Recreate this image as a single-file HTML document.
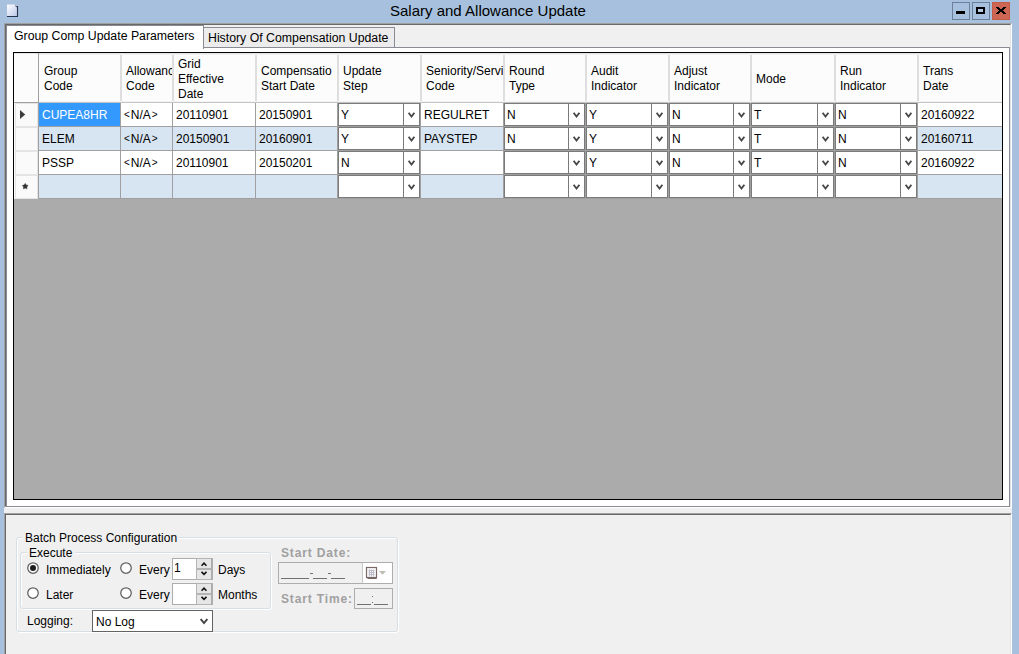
<!DOCTYPE html>
<html><head><meta charset="utf-8"><title>Salary and Allowance Update</title>
<style>
html,body{margin:0;padding:0;width:1019px;height:654px;overflow:hidden}
body{position:relative;font-family:"Liberation Sans", sans-serif;font-size:12px;color:#000}
div{position:absolute;box-sizing:border-box}
.t{white-space:nowrap}
</style></head><body>
<div style="left:0px;top:0px;width:1019px;height:654px;background:#a6c0dd"></div>
<svg style="position:absolute;left:7px;top:4px" width="12" height="14" viewBox="0 0 12 14"><defs><linearGradient id="g1" x1="0" y1="0" x2="1" y2="1"><stop offset="0" stop-color="#ffffff"/><stop offset="1" stop-color="#b9c6ea"/></linearGradient></defs><path d="M0 0.5 H8.5 L10.5 2.5 V12 H0 Z" fill="url(#g1)"/><path d="M10.5 2 V12.5 H0" fill="none" stroke="#26344f" stroke-width="1.1"/><path d="M8 0.6 L10.6 3.2 L8.6 3 Z" fill="#2a3a55"/><rect x="8.2" y="1.6" width="1" height="1" fill="#e8ecf8"/></svg>
<div class="t" style="left:390px;top:1.04px;font-size:15px;line-height:19px;color:#000;font-weight:400;">Salary and Allowance Update</div>
<div style="left:952px;top:2px;width:18px;height:18px;background:#a6c0dd;border:1px solid #6d7f99;box-sizing:border-box"><div style="left:3px;top:8px;width:9px;height:3px;background:#000"></div></div>
<div style="left:972px;top:2px;width:18px;height:18px;background:#a6c0dd;border:1px solid #6d7f99;box-sizing:border-box"><div style="left:3px;top:4px;width:9px;height:7px;border:2px solid #000;box-sizing:border-box;background:#b4cce6"></div></div>
<div style="left:992px;top:2px;width:18px;height:18px;background:#cd6652;border:1px solid #c45a48;box-sizing:border-box"><svg style="position:absolute;left:3px;top:4px" width="10" height="7" shape-rendering="crispEdges" fill="#000"><rect x="0" y="0" width="1" height="1"/><rect x="1" y="0" width="1" height="1"/><rect x="2" y="0" width="1" height="1"/><rect x="7" y="0" width="1" height="1"/><rect x="8" y="0" width="1" height="1"/><rect x="9" y="0" width="1" height="1"/><rect x="1" y="1" width="1" height="1"/><rect x="2" y="1" width="1" height="1"/><rect x="3" y="1" width="1" height="1"/><rect x="6" y="1" width="1" height="1"/><rect x="7" y="1" width="1" height="1"/><rect x="8" y="1" width="1" height="1"/><rect x="2" y="2" width="1" height="1"/><rect x="3" y="2" width="1" height="1"/><rect x="4" y="2" width="1" height="1"/><rect x="5" y="2" width="1" height="1"/><rect x="6" y="2" width="1" height="1"/><rect x="7" y="2" width="1" height="1"/><rect x="3" y="3" width="1" height="1"/><rect x="4" y="3" width="1" height="1"/><rect x="5" y="3" width="1" height="1"/><rect x="6" y="3" width="1" height="1"/><rect x="2" y="4" width="1" height="1"/><rect x="3" y="4" width="1" height="1"/><rect x="4" y="4" width="1" height="1"/><rect x="5" y="4" width="1" height="1"/><rect x="6" y="4" width="1" height="1"/><rect x="7" y="4" width="1" height="1"/><rect x="1" y="5" width="1" height="1"/><rect x="2" y="5" width="1" height="1"/><rect x="3" y="5" width="1" height="1"/><rect x="6" y="5" width="1" height="1"/><rect x="7" y="5" width="1" height="1"/><rect x="8" y="5" width="1" height="1"/><rect x="0" y="6" width="1" height="1"/><rect x="1" y="6" width="1" height="1"/><rect x="2" y="6" width="1" height="1"/><rect x="7" y="6" width="1" height="1"/><rect x="8" y="6" width="1" height="1"/><rect x="9" y="6" width="1" height="1"/></svg></div>
<div style="left:4px;top:23px;width:1008px;height:485px;background:#f0f0f0;border-top:1px solid #a0a0a0;border-left:1px solid #a0a0a0;border-right:1px solid #ffffff;border-bottom:1px solid #ffffff;box-sizing:border-box"></div>
<div style="left:5px;top:24px;width:1006px;height:483px;border-top:1px solid #696969;border-left:1px solid #696969;border-right:1px solid #e3e3e3;border-bottom:1px solid #e3e3e3;box-sizing:border-box"></div>
<div style="left:6px;top:47px;width:1004px;height:460px;background:#fff;border:1px solid #898c95;box-sizing:border-box"></div>
<div style="left:6px;top:25px;width:198px;height:24px;background:#fff;border:1px solid #898c95;border-bottom:none;box-sizing:border-box"></div>
<div style="left:7px;top:47px;width:196px;height:2px;background:#fff"></div>
<div class="t" style="left:14px;top:27.78px;font-size:12.3px;line-height:16.3px;color:#000;font-weight:400;">Group Comp Update Parameters</div>
<div style="left:203px;top:27px;width:192px;height:21px;background:#ececec;border:1px solid #898c95;box-sizing:border-box"></div>
<div class="t" style="left:208px;top:29.78px;font-size:12.3px;line-height:16.3px;color:#000;font-weight:400;">History Of Compensation Update</div>
<div style="left:13px;top:52px;width:990px;height:448px;background:#ababab;border:1px solid #000;box-sizing:border-box"></div>
<div style="left:14px;top:53px;width:988px;height:49px;background:#fcfcfc"></div>
<div style="left:14px;top:53px;width:988px;height:1px;background:#e6e6e6"></div>
<div style="left:39px;top:54px;width:962px;height:1px;background:#f0f0f0"></div>
<div style="left:14px;top:102px;width:25px;height:1px;background:#a0a0a0"></div>
<div style="left:39px;top:102px;width:962px;height:1px;background:#c4c4c4"></div>
<div style="left:39px;top:101px;width:962px;height:1px;background:#f4f4f4"></div>
<div style="left:38px;top:53px;width:1px;height:50px;background:#a0a0a0"></div>
<div style="left:120px;top:55px;width:2px;height:46px;background:#dedede"></div>
<div style="left:172px;top:55px;width:2px;height:46px;background:#dedede"></div>
<div style="left:255px;top:55px;width:2px;height:46px;background:#dedede"></div>
<div style="left:337px;top:55px;width:2px;height:46px;background:#dedede"></div>
<div style="left:420px;top:55px;width:2px;height:46px;background:#dedede"></div>
<div style="left:503px;top:55px;width:2px;height:46px;background:#dedede"></div>
<div style="left:585px;top:55px;width:2px;height:46px;background:#dedede"></div>
<div style="left:668px;top:55px;width:2px;height:46px;background:#dedede"></div>
<div style="left:750px;top:55px;width:2px;height:46px;background:#dedede"></div>
<div style="left:834px;top:55px;width:2px;height:46px;background:#dedede"></div>
<div style="left:917px;top:55px;width:2px;height:46px;background:#dedede"></div>
<div style="left:39px;top:53px;width:81px;height:49px;overflow:hidden"><div style="left:5px;top:0;width:300px;height:49px"><div class="t" style="left:0;top:11.30px;font-size:12px;line-height:15px">Group</div><div class="t" style="left:0;top:26.30px;font-size:12px;line-height:15px">Code</div></div></div>
<div style="left:121px;top:53px;width:51px;height:49px;overflow:hidden"><div style="left:5px;top:0;width:300px;height:49px"><div class="t" style="left:0;top:11.30px;font-size:12px;line-height:15px">Allowance</div><div class="t" style="left:0;top:26.30px;font-size:12px;line-height:15px">Code</div></div></div>
<div style="left:173px;top:53px;width:82px;height:49px;overflow:hidden"><div style="left:5px;top:0;width:300px;height:49px"><div class="t" style="left:0;top:4.30px;font-size:12px;line-height:15px">Grid</div><div class="t" style="left:0;top:19.30px;font-size:12px;line-height:15px">Effective</div><div class="t" style="left:0;top:34.30px;font-size:12px;line-height:15px">Date</div></div></div>
<div style="left:256px;top:53px;width:81px;height:49px;overflow:hidden"><div style="left:5px;top:0;width:300px;height:49px"><div class="t" style="left:0;top:11.30px;font-size:12px;line-height:15px">Compensatio</div><div class="t" style="left:0;top:26.30px;font-size:12px;line-height:15px">Start Date</div></div></div>
<div style="left:338px;top:53px;width:82px;height:49px;overflow:hidden"><div style="left:5px;top:0;width:300px;height:49px"><div class="t" style="left:0;top:11.30px;font-size:12px;line-height:15px">Update</div><div class="t" style="left:0;top:26.30px;font-size:12px;line-height:15px">Step</div></div></div>
<div style="left:421px;top:53px;width:82px;height:49px;overflow:hidden"><div style="left:5px;top:0;width:300px;height:49px"><div class="t" style="left:0;top:11.30px;font-size:12px;line-height:15px">Seniority/Service</div><div class="t" style="left:0;top:26.30px;font-size:12px;line-height:15px">Code</div></div></div>
<div style="left:504px;top:53px;width:81px;height:49px;overflow:hidden"><div style="left:5px;top:0;width:300px;height:49px"><div class="t" style="left:0;top:11.30px;font-size:12px;line-height:15px">Round</div><div class="t" style="left:0;top:26.30px;font-size:12px;line-height:15px">Type</div></div></div>
<div style="left:586px;top:53px;width:82px;height:49px;overflow:hidden"><div style="left:5px;top:0;width:300px;height:49px"><div class="t" style="left:0;top:11.30px;font-size:12px;line-height:15px">Audit</div><div class="t" style="left:0;top:26.30px;font-size:12px;line-height:15px">Indicator</div></div></div>
<div style="left:669px;top:53px;width:81px;height:49px;overflow:hidden"><div style="left:5px;top:0;width:300px;height:49px"><div class="t" style="left:0;top:11.30px;font-size:12px;line-height:15px">Adjust</div><div class="t" style="left:0;top:26.30px;font-size:12px;line-height:15px">Indicator</div></div></div>
<div style="left:751px;top:53px;width:83px;height:49px;overflow:hidden"><div style="left:5px;top:0;width:300px;height:49px"><div class="t" style="left:0;top:18.80px;font-size:12px;line-height:15px">Mode</div></div></div>
<div style="left:835px;top:53px;width:82px;height:49px;overflow:hidden"><div style="left:5px;top:0;width:300px;height:49px"><div class="t" style="left:0;top:11.30px;font-size:12px;line-height:15px">Run</div><div class="t" style="left:0;top:26.30px;font-size:12px;line-height:15px">Indicator</div></div></div>
<div style="left:918px;top:53px;width:83px;height:49px;overflow:hidden"><div style="left:5px;top:0;width:300px;height:49px"><div class="t" style="left:0;top:11.30px;font-size:12px;line-height:15px">Trans</div><div class="t" style="left:0;top:26.30px;font-size:12px;line-height:15px">Date</div></div></div>
<div style="left:14px;top:103px;width:24px;height:24px;background:#fdfdfd"></div>
<div style="left:15px;top:103px;width:23px;height:24px;background:#fafafa;border:1px solid #e4e4e4;box-sizing:border-box"></div>
<div style="left:38px;top:103px;width:1px;height:24px;background:#a0a0a0"></div>
<div style="left:39px;top:103px;width:81px;height:23px;background:#3399ff"></div>
<div class="t" style="left:42px;top:106.63px;font-size:12px;line-height:16px;color:#fff;font-weight:400;">CUPEA8HR</div>
<div style="left:120px;top:103px;width:1px;height:24px;background:#a0a0a0"></div>
<div style="left:121px;top:103px;width:51px;height:23px;background:#fff"></div>
<div class="t" style="left:124px;top:106.63px;font-size:12px;line-height:16px;color:#000;font-weight:400;"><span style="font-size:10px;position:relative;top:-1px;margin-right:1px">&lt;</span>N/A<span style="font-size:10px;position:relative;top:-1px;margin-left:1px">&gt;</span></div>
<div style="left:172px;top:103px;width:1px;height:24px;background:#a0a0a0"></div>
<div style="left:173px;top:103px;width:82px;height:23px;background:#fff"></div>
<div class="t" style="left:176px;top:106.63px;font-size:12px;line-height:16px;color:#000;font-weight:400;">20110901</div>
<div style="left:255px;top:103px;width:1px;height:24px;background:#a0a0a0"></div>
<div style="left:256px;top:103px;width:81px;height:23px;background:#fff"></div>
<div class="t" style="left:259px;top:106.63px;font-size:12px;line-height:16px;color:#000;font-weight:400;">20150901</div>
<div style="left:337px;top:103px;width:1px;height:24px;background:#a0a0a0"></div>
<div style="left:338px;top:103px;width:82px;height:23px;background:#fff"></div>
<div style="left:338px;top:103px;width:82px;height:23px;background:#fff;border:1px solid #7a7a7a;box-sizing:border-box"></div>
<div style="left:403px;top:103px;width:1px;height:23px;background:#7a7a7a"></div>
<svg style="position:absolute;left:408px;top:112px" width="7" height="7" viewBox="0 0 7 7"><path d="M0.6 0.8 L3.5 4.6 L6.4 0.8" fill="none" stroke="#484848" stroke-width="1.8"/></svg>
<div class="t" style="left:341px;top:106.63px;font-size:12px;line-height:16px;color:#000;font-weight:400;">Y</div>
<div style="left:420px;top:103px;width:1px;height:24px;background:#a0a0a0"></div>
<div style="left:421px;top:103px;width:82px;height:23px;background:#fff"></div>
<div class="t" style="left:424px;top:106.63px;font-size:12px;line-height:16px;color:#000;font-weight:400;">REGULRET</div>
<div style="left:503px;top:103px;width:1px;height:24px;background:#a0a0a0"></div>
<div style="left:504px;top:103px;width:81px;height:23px;background:#fff"></div>
<div style="left:504px;top:103px;width:81px;height:23px;background:#fff;border:1px solid #7a7a7a;box-sizing:border-box"></div>
<div style="left:568px;top:103px;width:1px;height:23px;background:#7a7a7a"></div>
<svg style="position:absolute;left:573px;top:112px" width="7" height="7" viewBox="0 0 7 7"><path d="M0.6 0.8 L3.5 4.6 L6.4 0.8" fill="none" stroke="#484848" stroke-width="1.8"/></svg>
<div class="t" style="left:507px;top:106.63px;font-size:12px;line-height:16px;color:#000;font-weight:400;">N</div>
<div style="left:585px;top:103px;width:1px;height:24px;background:#a0a0a0"></div>
<div style="left:586px;top:103px;width:82px;height:23px;background:#fff"></div>
<div style="left:586px;top:103px;width:82px;height:23px;background:#fff;border:1px solid #7a7a7a;box-sizing:border-box"></div>
<div style="left:651px;top:103px;width:1px;height:23px;background:#7a7a7a"></div>
<svg style="position:absolute;left:656px;top:112px" width="7" height="7" viewBox="0 0 7 7"><path d="M0.6 0.8 L3.5 4.6 L6.4 0.8" fill="none" stroke="#484848" stroke-width="1.8"/></svg>
<div class="t" style="left:589px;top:106.63px;font-size:12px;line-height:16px;color:#000;font-weight:400;">Y</div>
<div style="left:668px;top:103px;width:1px;height:24px;background:#a0a0a0"></div>
<div style="left:669px;top:103px;width:81px;height:23px;background:#fff"></div>
<div style="left:669px;top:103px;width:81px;height:23px;background:#fff;border:1px solid #7a7a7a;box-sizing:border-box"></div>
<div style="left:733px;top:103px;width:1px;height:23px;background:#7a7a7a"></div>
<svg style="position:absolute;left:738px;top:112px" width="7" height="7" viewBox="0 0 7 7"><path d="M0.6 0.8 L3.5 4.6 L6.4 0.8" fill="none" stroke="#484848" stroke-width="1.8"/></svg>
<div class="t" style="left:672px;top:106.63px;font-size:12px;line-height:16px;color:#000;font-weight:400;">N</div>
<div style="left:750px;top:103px;width:1px;height:24px;background:#a0a0a0"></div>
<div style="left:751px;top:103px;width:83px;height:23px;background:#fff"></div>
<div style="left:751px;top:103px;width:83px;height:23px;background:#fff;border:1px solid #7a7a7a;box-sizing:border-box"></div>
<div style="left:817px;top:103px;width:1px;height:23px;background:#7a7a7a"></div>
<svg style="position:absolute;left:822px;top:112px" width="7" height="7" viewBox="0 0 7 7"><path d="M0.6 0.8 L3.5 4.6 L6.4 0.8" fill="none" stroke="#484848" stroke-width="1.8"/></svg>
<div class="t" style="left:754px;top:106.63px;font-size:12px;line-height:16px;color:#000;font-weight:400;">T</div>
<div style="left:834px;top:103px;width:1px;height:24px;background:#a0a0a0"></div>
<div style="left:835px;top:103px;width:82px;height:23px;background:#fff"></div>
<div style="left:835px;top:103px;width:82px;height:23px;background:#fff;border:1px solid #7a7a7a;box-sizing:border-box"></div>
<div style="left:900px;top:103px;width:1px;height:23px;background:#7a7a7a"></div>
<svg style="position:absolute;left:905px;top:112px" width="7" height="7" viewBox="0 0 7 7"><path d="M0.6 0.8 L3.5 4.6 L6.4 0.8" fill="none" stroke="#484848" stroke-width="1.8"/></svg>
<div class="t" style="left:838px;top:106.63px;font-size:12px;line-height:16px;color:#000;font-weight:400;">N</div>
<div style="left:917px;top:103px;width:1px;height:24px;background:#a0a0a0"></div>
<div style="left:918px;top:103px;width:84px;height:23px;background:#fff"></div>
<div class="t" style="left:921px;top:106.63px;font-size:12px;line-height:16px;color:#000;font-weight:400;">20160922</div>
<div style="left:39px;top:126px;width:962px;height:1px;background:#a0a0a0"></div>
<div style="left:14px;top:127px;width:24px;height:24px;background:#fdfdfd"></div>
<div style="left:15px;top:127px;width:23px;height:24px;background:#fafafa;border:1px solid #e4e4e4;box-sizing:border-box"></div>
<div style="left:38px;top:127px;width:1px;height:24px;background:#a0a0a0"></div>
<div style="left:39px;top:127px;width:81px;height:23px;background:#d7e4f1"></div>
<div class="t" style="left:42px;top:130.63px;font-size:12px;line-height:16px;color:#000;font-weight:400;">ELEM</div>
<div style="left:120px;top:127px;width:1px;height:24px;background:#a0a0a0"></div>
<div style="left:121px;top:127px;width:51px;height:23px;background:#d7e4f1"></div>
<div class="t" style="left:124px;top:130.63px;font-size:12px;line-height:16px;color:#000;font-weight:400;"><span style="font-size:10px;position:relative;top:-1px;margin-right:1px">&lt;</span>N/A<span style="font-size:10px;position:relative;top:-1px;margin-left:1px">&gt;</span></div>
<div style="left:172px;top:127px;width:1px;height:24px;background:#a0a0a0"></div>
<div style="left:173px;top:127px;width:82px;height:23px;background:#d7e4f1"></div>
<div class="t" style="left:176px;top:130.63px;font-size:12px;line-height:16px;color:#000;font-weight:400;">20150901</div>
<div style="left:255px;top:127px;width:1px;height:24px;background:#a0a0a0"></div>
<div style="left:256px;top:127px;width:81px;height:23px;background:#d7e4f1"></div>
<div class="t" style="left:259px;top:130.63px;font-size:12px;line-height:16px;color:#000;font-weight:400;">20160901</div>
<div style="left:337px;top:127px;width:1px;height:24px;background:#a0a0a0"></div>
<div style="left:338px;top:127px;width:82px;height:23px;background:#d7e4f1"></div>
<div style="left:338px;top:127px;width:82px;height:23px;background:#fff;border:1px solid #7a7a7a;box-sizing:border-box"></div>
<div style="left:403px;top:127px;width:1px;height:23px;background:#7a7a7a"></div>
<svg style="position:absolute;left:408px;top:136px" width="7" height="7" viewBox="0 0 7 7"><path d="M0.6 0.8 L3.5 4.6 L6.4 0.8" fill="none" stroke="#484848" stroke-width="1.8"/></svg>
<div class="t" style="left:341px;top:130.63px;font-size:12px;line-height:16px;color:#000;font-weight:400;">Y</div>
<div style="left:420px;top:127px;width:1px;height:24px;background:#a0a0a0"></div>
<div style="left:421px;top:127px;width:82px;height:23px;background:#d7e4f1"></div>
<div class="t" style="left:424px;top:130.63px;font-size:12px;line-height:16px;color:#000;font-weight:400;">PAYSTEP</div>
<div style="left:503px;top:127px;width:1px;height:24px;background:#a0a0a0"></div>
<div style="left:504px;top:127px;width:81px;height:23px;background:#d7e4f1"></div>
<div style="left:504px;top:127px;width:81px;height:23px;background:#fff;border:1px solid #7a7a7a;box-sizing:border-box"></div>
<div style="left:568px;top:127px;width:1px;height:23px;background:#7a7a7a"></div>
<svg style="position:absolute;left:573px;top:136px" width="7" height="7" viewBox="0 0 7 7"><path d="M0.6 0.8 L3.5 4.6 L6.4 0.8" fill="none" stroke="#484848" stroke-width="1.8"/></svg>
<div class="t" style="left:507px;top:130.63px;font-size:12px;line-height:16px;color:#000;font-weight:400;">N</div>
<div style="left:585px;top:127px;width:1px;height:24px;background:#a0a0a0"></div>
<div style="left:586px;top:127px;width:82px;height:23px;background:#d7e4f1"></div>
<div style="left:586px;top:127px;width:82px;height:23px;background:#fff;border:1px solid #7a7a7a;box-sizing:border-box"></div>
<div style="left:651px;top:127px;width:1px;height:23px;background:#7a7a7a"></div>
<svg style="position:absolute;left:656px;top:136px" width="7" height="7" viewBox="0 0 7 7"><path d="M0.6 0.8 L3.5 4.6 L6.4 0.8" fill="none" stroke="#484848" stroke-width="1.8"/></svg>
<div class="t" style="left:589px;top:130.63px;font-size:12px;line-height:16px;color:#000;font-weight:400;">Y</div>
<div style="left:668px;top:127px;width:1px;height:24px;background:#a0a0a0"></div>
<div style="left:669px;top:127px;width:81px;height:23px;background:#d7e4f1"></div>
<div style="left:669px;top:127px;width:81px;height:23px;background:#fff;border:1px solid #7a7a7a;box-sizing:border-box"></div>
<div style="left:733px;top:127px;width:1px;height:23px;background:#7a7a7a"></div>
<svg style="position:absolute;left:738px;top:136px" width="7" height="7" viewBox="0 0 7 7"><path d="M0.6 0.8 L3.5 4.6 L6.4 0.8" fill="none" stroke="#484848" stroke-width="1.8"/></svg>
<div class="t" style="left:672px;top:130.63px;font-size:12px;line-height:16px;color:#000;font-weight:400;">N</div>
<div style="left:750px;top:127px;width:1px;height:24px;background:#a0a0a0"></div>
<div style="left:751px;top:127px;width:83px;height:23px;background:#d7e4f1"></div>
<div style="left:751px;top:127px;width:83px;height:23px;background:#fff;border:1px solid #7a7a7a;box-sizing:border-box"></div>
<div style="left:817px;top:127px;width:1px;height:23px;background:#7a7a7a"></div>
<svg style="position:absolute;left:822px;top:136px" width="7" height="7" viewBox="0 0 7 7"><path d="M0.6 0.8 L3.5 4.6 L6.4 0.8" fill="none" stroke="#484848" stroke-width="1.8"/></svg>
<div class="t" style="left:754px;top:130.63px;font-size:12px;line-height:16px;color:#000;font-weight:400;">T</div>
<div style="left:834px;top:127px;width:1px;height:24px;background:#a0a0a0"></div>
<div style="left:835px;top:127px;width:82px;height:23px;background:#d7e4f1"></div>
<div style="left:835px;top:127px;width:82px;height:23px;background:#fff;border:1px solid #7a7a7a;box-sizing:border-box"></div>
<div style="left:900px;top:127px;width:1px;height:23px;background:#7a7a7a"></div>
<svg style="position:absolute;left:905px;top:136px" width="7" height="7" viewBox="0 0 7 7"><path d="M0.6 0.8 L3.5 4.6 L6.4 0.8" fill="none" stroke="#484848" stroke-width="1.8"/></svg>
<div class="t" style="left:838px;top:130.63px;font-size:12px;line-height:16px;color:#000;font-weight:400;">N</div>
<div style="left:917px;top:127px;width:1px;height:24px;background:#a0a0a0"></div>
<div style="left:918px;top:127px;width:84px;height:23px;background:#d7e4f1"></div>
<div class="t" style="left:921px;top:130.63px;font-size:12px;line-height:16px;color:#000;font-weight:400;">20160711</div>
<div style="left:39px;top:150px;width:962px;height:1px;background:#a0a0a0"></div>
<div style="left:14px;top:151px;width:24px;height:24px;background:#fdfdfd"></div>
<div style="left:15px;top:151px;width:23px;height:24px;background:#fafafa;border:1px solid #e4e4e4;box-sizing:border-box"></div>
<div style="left:38px;top:151px;width:1px;height:24px;background:#a0a0a0"></div>
<div style="left:39px;top:151px;width:81px;height:23px;background:#fff"></div>
<div class="t" style="left:42px;top:154.63px;font-size:12px;line-height:16px;color:#000;font-weight:400;">PSSP</div>
<div style="left:120px;top:151px;width:1px;height:24px;background:#a0a0a0"></div>
<div style="left:121px;top:151px;width:51px;height:23px;background:#fff"></div>
<div class="t" style="left:124px;top:154.63px;font-size:12px;line-height:16px;color:#000;font-weight:400;"><span style="font-size:10px;position:relative;top:-1px;margin-right:1px">&lt;</span>N/A<span style="font-size:10px;position:relative;top:-1px;margin-left:1px">&gt;</span></div>
<div style="left:172px;top:151px;width:1px;height:24px;background:#a0a0a0"></div>
<div style="left:173px;top:151px;width:82px;height:23px;background:#fff"></div>
<div class="t" style="left:176px;top:154.63px;font-size:12px;line-height:16px;color:#000;font-weight:400;">20110901</div>
<div style="left:255px;top:151px;width:1px;height:24px;background:#a0a0a0"></div>
<div style="left:256px;top:151px;width:81px;height:23px;background:#fff"></div>
<div class="t" style="left:259px;top:154.63px;font-size:12px;line-height:16px;color:#000;font-weight:400;">20150201</div>
<div style="left:337px;top:151px;width:1px;height:24px;background:#a0a0a0"></div>
<div style="left:338px;top:151px;width:82px;height:23px;background:#fff"></div>
<div style="left:338px;top:151px;width:82px;height:23px;background:#fff;border:1px solid #7a7a7a;box-sizing:border-box"></div>
<div style="left:403px;top:151px;width:1px;height:23px;background:#7a7a7a"></div>
<svg style="position:absolute;left:408px;top:160px" width="7" height="7" viewBox="0 0 7 7"><path d="M0.6 0.8 L3.5 4.6 L6.4 0.8" fill="none" stroke="#484848" stroke-width="1.8"/></svg>
<div class="t" style="left:341px;top:154.63px;font-size:12px;line-height:16px;color:#000;font-weight:400;">N</div>
<div style="left:420px;top:151px;width:1px;height:24px;background:#a0a0a0"></div>
<div style="left:421px;top:151px;width:82px;height:23px;background:#fff"></div>
<div style="left:503px;top:151px;width:1px;height:24px;background:#a0a0a0"></div>
<div style="left:504px;top:151px;width:81px;height:23px;background:#fff"></div>
<div style="left:504px;top:151px;width:81px;height:23px;background:#fff;border:1px solid #7a7a7a;box-sizing:border-box"></div>
<div style="left:568px;top:151px;width:1px;height:23px;background:#7a7a7a"></div>
<svg style="position:absolute;left:573px;top:160px" width="7" height="7" viewBox="0 0 7 7"><path d="M0.6 0.8 L3.5 4.6 L6.4 0.8" fill="none" stroke="#484848" stroke-width="1.8"/></svg>
<div style="left:585px;top:151px;width:1px;height:24px;background:#a0a0a0"></div>
<div style="left:586px;top:151px;width:82px;height:23px;background:#fff"></div>
<div style="left:586px;top:151px;width:82px;height:23px;background:#fff;border:1px solid #7a7a7a;box-sizing:border-box"></div>
<div style="left:651px;top:151px;width:1px;height:23px;background:#7a7a7a"></div>
<svg style="position:absolute;left:656px;top:160px" width="7" height="7" viewBox="0 0 7 7"><path d="M0.6 0.8 L3.5 4.6 L6.4 0.8" fill="none" stroke="#484848" stroke-width="1.8"/></svg>
<div class="t" style="left:589px;top:154.63px;font-size:12px;line-height:16px;color:#000;font-weight:400;">Y</div>
<div style="left:668px;top:151px;width:1px;height:24px;background:#a0a0a0"></div>
<div style="left:669px;top:151px;width:81px;height:23px;background:#fff"></div>
<div style="left:669px;top:151px;width:81px;height:23px;background:#fff;border:1px solid #7a7a7a;box-sizing:border-box"></div>
<div style="left:733px;top:151px;width:1px;height:23px;background:#7a7a7a"></div>
<svg style="position:absolute;left:738px;top:160px" width="7" height="7" viewBox="0 0 7 7"><path d="M0.6 0.8 L3.5 4.6 L6.4 0.8" fill="none" stroke="#484848" stroke-width="1.8"/></svg>
<div class="t" style="left:672px;top:154.63px;font-size:12px;line-height:16px;color:#000;font-weight:400;">N</div>
<div style="left:750px;top:151px;width:1px;height:24px;background:#a0a0a0"></div>
<div style="left:751px;top:151px;width:83px;height:23px;background:#fff"></div>
<div style="left:751px;top:151px;width:83px;height:23px;background:#fff;border:1px solid #7a7a7a;box-sizing:border-box"></div>
<div style="left:817px;top:151px;width:1px;height:23px;background:#7a7a7a"></div>
<svg style="position:absolute;left:822px;top:160px" width="7" height="7" viewBox="0 0 7 7"><path d="M0.6 0.8 L3.5 4.6 L6.4 0.8" fill="none" stroke="#484848" stroke-width="1.8"/></svg>
<div class="t" style="left:754px;top:154.63px;font-size:12px;line-height:16px;color:#000;font-weight:400;">T</div>
<div style="left:834px;top:151px;width:1px;height:24px;background:#a0a0a0"></div>
<div style="left:835px;top:151px;width:82px;height:23px;background:#fff"></div>
<div style="left:835px;top:151px;width:82px;height:23px;background:#fff;border:1px solid #7a7a7a;box-sizing:border-box"></div>
<div style="left:900px;top:151px;width:1px;height:23px;background:#7a7a7a"></div>
<svg style="position:absolute;left:905px;top:160px" width="7" height="7" viewBox="0 0 7 7"><path d="M0.6 0.8 L3.5 4.6 L6.4 0.8" fill="none" stroke="#484848" stroke-width="1.8"/></svg>
<div class="t" style="left:838px;top:154.63px;font-size:12px;line-height:16px;color:#000;font-weight:400;">N</div>
<div style="left:917px;top:151px;width:1px;height:24px;background:#a0a0a0"></div>
<div style="left:918px;top:151px;width:84px;height:23px;background:#fff"></div>
<div class="t" style="left:921px;top:154.63px;font-size:12px;line-height:16px;color:#000;font-weight:400;">20160922</div>
<div style="left:39px;top:174px;width:962px;height:1px;background:#a0a0a0"></div>
<div style="left:14px;top:175px;width:24px;height:24px;background:#fdfdfd"></div>
<div style="left:15px;top:175px;width:23px;height:24px;background:#fafafa;border:1px solid #e4e4e4;box-sizing:border-box"></div>
<div style="left:38px;top:175px;width:1px;height:24px;background:#a0a0a0"></div>
<div style="left:39px;top:175px;width:81px;height:23px;background:#d7e4f1"></div>
<div style="left:120px;top:175px;width:1px;height:24px;background:#a0a0a0"></div>
<div style="left:121px;top:175px;width:51px;height:23px;background:#d7e4f1"></div>
<div style="left:172px;top:175px;width:1px;height:24px;background:#a0a0a0"></div>
<div style="left:173px;top:175px;width:82px;height:23px;background:#d7e4f1"></div>
<div style="left:255px;top:175px;width:1px;height:24px;background:#a0a0a0"></div>
<div style="left:256px;top:175px;width:81px;height:23px;background:#d7e4f1"></div>
<div style="left:337px;top:175px;width:1px;height:24px;background:#a0a0a0"></div>
<div style="left:338px;top:175px;width:82px;height:23px;background:#d7e4f1"></div>
<div style="left:338px;top:175px;width:82px;height:23px;background:#fff;border:1px solid #7a7a7a;box-sizing:border-box"></div>
<div style="left:403px;top:175px;width:1px;height:23px;background:#7a7a7a"></div>
<svg style="position:absolute;left:408px;top:184px" width="7" height="7" viewBox="0 0 7 7"><path d="M0.6 0.8 L3.5 4.6 L6.4 0.8" fill="none" stroke="#484848" stroke-width="1.8"/></svg>
<div style="left:420px;top:175px;width:1px;height:24px;background:#a0a0a0"></div>
<div style="left:421px;top:175px;width:82px;height:23px;background:#d7e4f1"></div>
<div style="left:503px;top:175px;width:1px;height:24px;background:#a0a0a0"></div>
<div style="left:504px;top:175px;width:81px;height:23px;background:#d7e4f1"></div>
<div style="left:504px;top:175px;width:81px;height:23px;background:#fff;border:1px solid #7a7a7a;box-sizing:border-box"></div>
<div style="left:568px;top:175px;width:1px;height:23px;background:#7a7a7a"></div>
<svg style="position:absolute;left:573px;top:184px" width="7" height="7" viewBox="0 0 7 7"><path d="M0.6 0.8 L3.5 4.6 L6.4 0.8" fill="none" stroke="#484848" stroke-width="1.8"/></svg>
<div style="left:585px;top:175px;width:1px;height:24px;background:#a0a0a0"></div>
<div style="left:586px;top:175px;width:82px;height:23px;background:#d7e4f1"></div>
<div style="left:586px;top:175px;width:82px;height:23px;background:#fff;border:1px solid #7a7a7a;box-sizing:border-box"></div>
<div style="left:651px;top:175px;width:1px;height:23px;background:#7a7a7a"></div>
<svg style="position:absolute;left:656px;top:184px" width="7" height="7" viewBox="0 0 7 7"><path d="M0.6 0.8 L3.5 4.6 L6.4 0.8" fill="none" stroke="#484848" stroke-width="1.8"/></svg>
<div style="left:668px;top:175px;width:1px;height:24px;background:#a0a0a0"></div>
<div style="left:669px;top:175px;width:81px;height:23px;background:#d7e4f1"></div>
<div style="left:669px;top:175px;width:81px;height:23px;background:#fff;border:1px solid #7a7a7a;box-sizing:border-box"></div>
<div style="left:733px;top:175px;width:1px;height:23px;background:#7a7a7a"></div>
<svg style="position:absolute;left:738px;top:184px" width="7" height="7" viewBox="0 0 7 7"><path d="M0.6 0.8 L3.5 4.6 L6.4 0.8" fill="none" stroke="#484848" stroke-width="1.8"/></svg>
<div style="left:750px;top:175px;width:1px;height:24px;background:#a0a0a0"></div>
<div style="left:751px;top:175px;width:83px;height:23px;background:#d7e4f1"></div>
<div style="left:751px;top:175px;width:83px;height:23px;background:#fff;border:1px solid #7a7a7a;box-sizing:border-box"></div>
<div style="left:817px;top:175px;width:1px;height:23px;background:#7a7a7a"></div>
<svg style="position:absolute;left:822px;top:184px" width="7" height="7" viewBox="0 0 7 7"><path d="M0.6 0.8 L3.5 4.6 L6.4 0.8" fill="none" stroke="#484848" stroke-width="1.8"/></svg>
<div style="left:834px;top:175px;width:1px;height:24px;background:#a0a0a0"></div>
<div style="left:835px;top:175px;width:82px;height:23px;background:#d7e4f1"></div>
<div style="left:835px;top:175px;width:82px;height:23px;background:#fff;border:1px solid #7a7a7a;box-sizing:border-box"></div>
<div style="left:900px;top:175px;width:1px;height:23px;background:#7a7a7a"></div>
<svg style="position:absolute;left:905px;top:184px" width="7" height="7" viewBox="0 0 7 7"><path d="M0.6 0.8 L3.5 4.6 L6.4 0.8" fill="none" stroke="#484848" stroke-width="1.8"/></svg>
<div style="left:917px;top:175px;width:1px;height:24px;background:#a0a0a0"></div>
<div style="left:918px;top:175px;width:84px;height:23px;background:#d7e4f1"></div>
<div style="left:39px;top:198px;width:962px;height:1px;background:#a0a0a0"></div>
<svg style="position:absolute;left:20px;top:110px" width="6" height="9" viewBox="0 0 6 9"><path d="M0 0 L5.2 4.5 L0 9 Z" fill="#3c3c3c"/></svg>
<svg style="position:absolute;left:22px;top:183px" width="7" height="7" viewBox="0 0 7 7"><polygon points="3.20,0.40 4.20,2.02 6.05,2.47 4.82,3.93 4.96,5.83 3.20,5.10 1.44,5.83 1.58,3.93 0.35,2.47 2.20,2.02" fill="#333" stroke="#333" stroke-width="0.5" stroke-linejoin="round"/></svg>
<div style="left:4px;top:508px;width:1008px;height:6px;background:#f0f0f0"></div>
<div style="left:4px;top:513px;width:1008px;height:141px;background:#f0f0f0;border-top:1px solid #a0a0a0;border-left:1px solid #a0a0a0;border-right:1px solid #fff;box-sizing:border-box"></div>
<div style="left:5px;top:514px;width:1006px;height:140px;border-top:1px solid #696969;border-left:1px solid #696969;border-right:1px solid #e3e3e3;box-sizing:border-box"></div>
<div style="left:17px;top:538px;width:382px;height:95px;border:1px solid #ffffff;border-radius:3px;box-sizing:border-box"></div>
<div style="left:16px;top:537px;width:382px;height:95px;border:1px solid #d5dfe5;border-radius:3px;box-sizing:border-box"></div>
<div style="left:23px;top:536px;width:156px;height:4px;background:#f0f0f0"></div>
<div class="t" style="left:25px;top:530.03px;font-size:12px;line-height:16px;color:#000;font-weight:400;">Batch Process Configuration</div>
<div style="left:21px;top:553px;width:251px;height:57px;border:1px solid #ffffff;border-radius:3px;box-sizing:border-box"></div>
<div style="left:20px;top:552px;width:251px;height:57px;border:1px solid #d5dfe5;border-radius:3px;box-sizing:border-box"></div>
<div style="left:27px;top:551px;width:48px;height:4px;background:#f0f0f0"></div>
<div class="t" style="left:29px;top:545.03px;font-size:12px;line-height:16px;color:#000;font-weight:400;">Execute</div>
<svg style="position:absolute;left:27px;top:562px" width="12" height="12" viewBox="0 0 12 12"><circle cx="6" cy="6" r="5.25" fill="#fff" stroke="#5e5e5e" stroke-width="1.25"/><circle cx="6" cy="6" r="3" fill="#1c1c1c"/></svg>
<div class="t" style="left:46px;top:562.03px;font-size:12px;line-height:16px;color:#000;font-weight:400;">Immediately</div>
<svg style="position:absolute;left:27px;top:587px" width="12" height="12" viewBox="0 0 12 12"><circle cx="6" cy="6" r="5.25" fill="#fff" stroke="#5e5e5e" stroke-width="1.25"/></svg>
<div class="t" style="left:46px;top:587.03px;font-size:12px;line-height:16px;color:#000;font-weight:400;">Later</div>
<svg style="position:absolute;left:120px;top:562px" width="12" height="12" viewBox="0 0 12 12"><circle cx="6" cy="6" r="5.25" fill="#fff" stroke="#5e5e5e" stroke-width="1.25"/></svg>
<div class="t" style="left:139px;top:562.03px;font-size:12px;line-height:16px;color:#000;font-weight:400;">Every</div>
<svg style="position:absolute;left:120px;top:587px" width="12" height="12" viewBox="0 0 12 12"><circle cx="6" cy="6" r="5.25" fill="#fff" stroke="#5e5e5e" stroke-width="1.25"/></svg>
<div class="t" style="left:139px;top:587.03px;font-size:12px;line-height:16px;color:#000;font-weight:400;">Every</div>
<div style="left:172px;top:558px;width:41px;height:22px;background:#fff;border:1px solid #adadad;border-right-width:2px;box-sizing:border-box"></div>
<div style="left:196px;top:558px;width:15px;height:22px;background:#b4b4b4"></div>
<div style="left:197px;top:559px;width:14px;height:9px;background:#e6e6e6"></div>
<div style="left:197px;top:570px;width:14px;height:9px;background:#e6e6e6"></div>
<svg style="position:absolute;left:201px;top:562px" width="6" height="14" viewBox="0 0 6 14"><path d="M0.5 3.8 L3 1.2 L5.5 3.8 M0.5 9.8 L3 12.4 L5.5 9.8" fill="none" stroke="#111" stroke-width="1.6"/></svg>
<div class="t" style="left:174px;top:560.03px;font-size:12px;line-height:16px;color:#000;font-weight:400;">1</div>
<div class="t" style="left:218px;top:562.03px;font-size:12px;line-height:16px;color:#000;font-weight:400;">Days</div>
<div style="left:172px;top:583px;width:41px;height:22px;background:#fff;border:1px solid #adadad;border-right-width:2px;box-sizing:border-box"></div>
<div style="left:196px;top:583px;width:15px;height:22px;background:#b4b4b4"></div>
<div style="left:197px;top:584px;width:14px;height:9px;background:#e6e6e6"></div>
<div style="left:197px;top:595px;width:14px;height:9px;background:#e6e6e6"></div>
<svg style="position:absolute;left:201px;top:587px" width="6" height="14" viewBox="0 0 6 14"><path d="M0.5 3.8 L3 1.2 L5.5 3.8 M0.5 9.8 L3 12.4 L5.5 9.8" fill="none" stroke="#111" stroke-width="1.6"/></svg>
<div class="t" style="left:218px;top:587.03px;font-size:12px;line-height:16px;color:#000;font-weight:400;">Months</div>
<div class="t" style="left:27px;top:613.03px;font-size:12px;line-height:16px;color:#000;font-weight:400;">Logging:</div>
<div style="left:92px;top:610px;width:121px;height:22px;background:#fff;border:1px solid #646464;box-sizing:border-box"></div>
<div class="t" style="left:96px;top:614.03px;font-size:12px;line-height:16px;color:#000;font-weight:400;">No Log</div>
<svg style="position:absolute;left:200px;top:618px" width="8" height="7" viewBox="0 0 8 7"><path d="M0.7 1 L4 5 L7.3 1" fill="none" stroke="#444" stroke-width="1.9"/></svg>
<div class="t" style="left:281px;top:545.03px;font-size:12px;line-height:16px;color:#a0a0a0;font-weight:700;letter-spacing:0.85px">Start Date:</div>
<div style="left:278px;top:562px;width:115px;height:22px;background:#f0f0f0;border:1px solid #adadad;box-sizing:border-box"></div>
<div style="left:363px;top:563px;width:29px;height:20px;background:#fff"></div>
<div style="left:362px;top:563px;width:1px;height:20px;background:#c8c8c8"></div>
<div style="left:281px;top:578px;width:28px;height:1px;background:#707070"></div>
<div style="left:313px;top:578px;width:14px;height:1px;background:#707070"></div>
<div style="left:331px;top:578px;width:14px;height:1px;background:#707070"></div>
<div style="left:310px;top:573px;width:3px;height:1px;background:#707070"></div>
<div style="left:328px;top:573px;width:3px;height:1px;background:#707070"></div>
<svg style="position:absolute;left:365px;top:566px" width="23" height="14" viewBox="0 0 23 14"><rect x="1.5" y="1.5" width="10" height="10" fill="#fafafa" stroke="#7a6a66" stroke-width="1.2"/><path d="M11.5 3 V12.5 H2.5" fill="none" stroke="#7a6a66" stroke-width="1"/><path d="M3.5 4.5 h6 M3.5 6.5 h6 M3.5 8.5 h6 M4.5 3.5 v7 M6.5 3.5 v7 M8.5 3.5 v7" stroke="#b8b8c8" stroke-width="0.9"/><path d="M14 5 L21 5 L17.5 8.8 Z" fill="#bcbcb4"/></svg>
<div class="t" style="left:281px;top:591.03px;font-size:12px;line-height:16px;color:#a0a0a0;font-weight:700;letter-spacing:0.85px">Start Time:</div>
<div style="left:354px;top:588px;width:39px;height:21px;background:#f0f0f0;border:1px solid #adadad;box-sizing:border-box"></div>
<div style="left:357px;top:604px;width:14px;height:1px;background:#707070"></div>
<div style="left:374px;top:604px;width:14px;height:1px;background:#707070"></div>
<div style="left:372px;top:596px;width:1px;height:1px;background:#707070"></div>
<div style="left:372px;top:602px;width:1px;height:1px;background:#707070"></div>
</body></html>
